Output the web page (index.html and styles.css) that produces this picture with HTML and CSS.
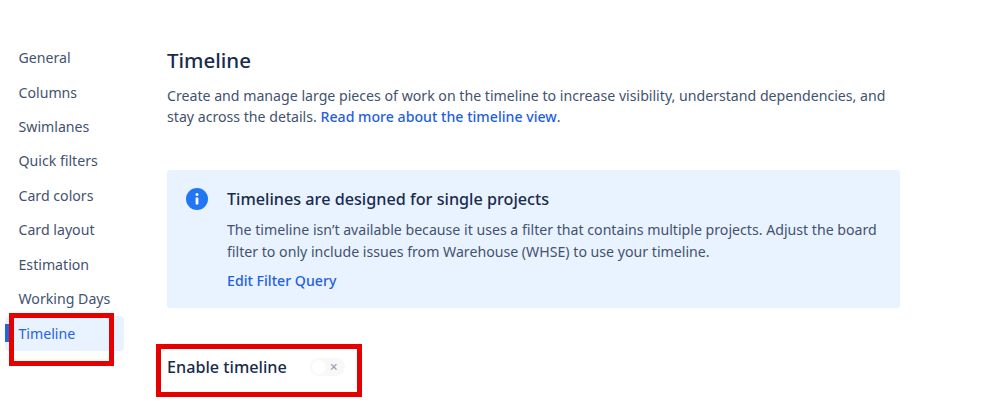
FILE: index.html

```html
<!DOCTYPE html>
<html lang="en">
<head>
    <meta charset="UTF-8">
    <title>Timeline</title>
    <link rel="stylesheet" href="styles.css">
</head>
<body>
    <div class="page">
        <nav class="side">
            <a href="#">General</a>
            <a href="#">Columns</a>
            <a href="#">Swimlanes</a>
            <a href="#">Quick filters</a>
            <a href="#">Card colors</a>
            <a href="#">Card layout</a>
            <a href="#">Estimation</a>
            <a href="#">Working Days</a>
            <a href="#" class="active">Timeline</a>
        </nav>
        <main class="content">
            <h1>Timeline</h1>
            <p class="intro">Create and manage large pieces of work on the timeline to increase visibility, understand dependencies, and stay across the details. <a href="#">Read more about the timeline view</a>.</p>
            <section class="notice">
                <svg class="notice-icon" width="22" height="22" viewBox="0 0 22 22">
                    <circle cx="11" cy="11" r="11" fill="#2176f5"/>
                    <circle cx="11" cy="6.6" r="1.5" fill="#fff"/>
                    <rect x="9.6" y="9.4" width="2.8" height="7" rx="0.6" fill="#fff"/>
                </svg>
                <div>
                    <h2>Timelines are designed for single projects</h2>
                    <p>The timeline isn’t available because it uses a filter that contains multiple projects. Adjust the board filter to only include issues from Warehouse (WHSE) to use your timeline.</p>
                    <a href="#">Edit Filter Query</a>
                </div>
            </section>
            <div class="enable">
                <span>Enable timeline</span>
                <span class="toggle"><i class="knob"></i><i class="cross">×</i></span>
            </div>
        </main>
    </div>
    <div class="mark mark-nav"></div>
    <div class="mark mark-enable"></div>
</body>
</html>
```

FILE: styles.css

```css
html, body {
    height: 100%;
}
body {
    margin: 0;
    background-color: #fff;
    color: #42526e;
    font-family: "Noto Sans", "Open Sans", sans-serif;
    font-size: 14.15px;
    overflow: hidden;
}
.page {
    display: flex;
    padding-top: 40.5px;
}
.side {
    width: 119px;
    margin-left: 5px;
    flex-shrink: 0;
    display: flex;
    flex-direction: column;
}
.side a {
    display: flex;
    align-items: center;
    height: 34.4px;
    padding-left: 13.5px;
    color: #42526e;
    text-decoration: none;
}
.side a.active {
    position: relative;
    color: #2563e0;
    background-color: #e9f2ff;
    border-radius: 4px;
    height: 35px;
}
.side a.active::before {
    content: "";
    position: absolute;
    left: 0;
    top: 8px;
    width: 4px;
    height: 18px;
    background-color: #1f66e5;
}
.content {
    margin-left: 43px;
    width: 733px;
}
h1 {
    margin: 5px 0 0;
    font-size: 20.5px;
    font-weight: 500;
    line-height: 28px;
    color: #172b4d;
}
.intro {
    margin: 11px 0 0;
    line-height: 21px;
}
a {
    color: #1f5fe0;
    text-decoration: none;
}
.intro a, .notice a {
    font-weight: 500;
}
.notice {
    display: flex;
    gap: 19px;
    margin-top: 43px;
    padding: 17px 19px 18px;
    background-color: #e9f2ff;
    border-radius: 3px;
}
.notice-icon {
    flex-shrink: 0;
    margin-top: 1px;
}
.notice h2 {
    margin: 0;
    font-size: 16.2px;
    font-weight: 500;
    line-height: 24px;
    color: #172b4d;
}
.notice p {
    margin: 8px 0 8px;
    line-height: 22px;
}
.enable {
    display: flex;
    align-items: center;
    gap: 23px;
    margin-top: 48px;
    font-size: 16.2px;
    font-weight: 500;
    color: #172b4d;
}
.toggle {
    display: flex;
    align-items: center;
    justify-content: space-between;
    width: 35px;
    height: 18px;
    padding: 0 7px 0 2px;
    box-sizing: border-box;
    background-color: #f8f8f9;
    border-radius: 9px;
}
.knob {
    width: 14px;
    height: 14px;
    border-radius: 50%;
    background-color: #fff;
}
.cross {
    font-style: normal;
    font-size: 14px;
    line-height: 14px;
    color: #97a0af;
}
.mark {
    position: absolute;
    box-sizing: border-box;
    border: 5px solid #e60000;
}
.mark-nav {
    left: 9px;
    top: 313px;
    width: 105px;
    height: 53px;
}
.mark-enable {
    left: 156px;
    top: 344px;
    width: 206px;
    height: 53px;
}
```
